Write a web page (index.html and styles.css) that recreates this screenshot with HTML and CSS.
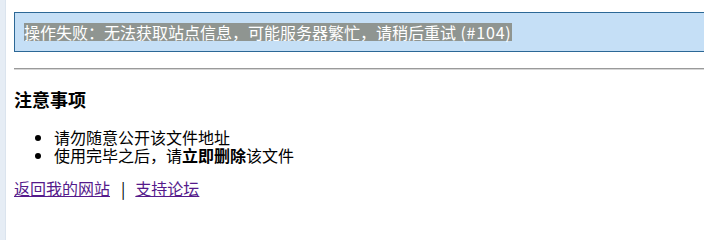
FILE: index.html
```html
<!DOCTYPE html>
<html lang="zh-CN">
<head>
<meta charset="utf-8">
<title>操作失败</title>
<link rel="stylesheet" href="styles.css">
</head>
<body>
<div class="frame">
  <div class="content">
    <div class="alert"><span class="selected">操作失败：无法获取站点信息，可能服务器繁忙，请稍后重试<span class="ascii"> (#104)</span></span></div>
    <hr class="rule">
    <h3 class="title">注意事项</h3>
    <ul class="notes">
      <li>请勿随意公开该文件地址</li>
      <li>使用完毕之后，请<strong>立即删除</strong>该文件</li>
    </ul>
    <p class="links"><a href="#" class="link">返回我的网站</a><span class="sep">|</span><a href="#" class="link">支持论坛</a></p>
  </div>
</div>
</body>
</html>
```

FILE: styles.css
```css
html, body {
  margin: 0;
  padding: 0;
  background: #ffffff;
  overflow: hidden;
}

body {
  font-family: "Noto Sans CJK SC", "Noto Sans", sans-serif;
  font-size: 16px;
  line-height: 18px;
  color: #000000;
}

.frame {
  height: 100vh;
  border-left: 5px solid #e6edf5;
  box-shadow: inset 1px 0 0 #dbe4ee;
  overflow: hidden;
}

.content {
  padding-left: 9px;
  padding-top: 12px;
}

.alert {
  margin-right: -20px;
  border: 1px solid #2c6896;
  background: #c5dff6;
  padding: 10px 9px;
  height: 18px;
  white-space: nowrap;
}

.selected {
  display: inline-block;
  height: 18px;
  line-height: 18px;
  background: #8f9591;
  color: #ffffff;
}

.ascii {
  letter-spacing: 0.8px;
}

.rule {
  margin: 16px -20px 0 0;
  border: 0;
  border-top: 1px solid #9a9a9a;
  border-bottom: 1px solid #d6d6d6;
  height: 0;
}

.title {
  margin: 18px 0 0;
  font-size: 18px;
  line-height: 22px;
  font-weight: bold;
}

.notes {
  margin: 18px 0 0;
  padding-left: 40px;
}

.notes li {
  line-height: 18px;
}

.notes strong {
  font-weight: bold;
}

.links {
  margin: 15px 0 0;
  line-height: 18px;
}

.link {
  color: #551a8b;
  text-decoration: underline;
}

.sep {
  color: #000000;
  padding: 0 10px 0 11px;
}
```
